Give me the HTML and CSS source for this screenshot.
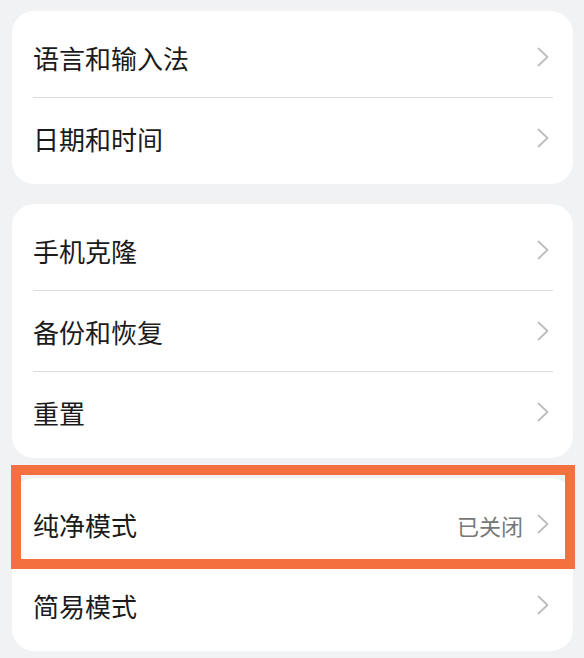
FILE: index.html
```html
<!DOCTYPE html>
<html lang="zh-CN">
<head>
    <meta charset="UTF-8">
    <meta name="viewport" content="width=device-width, initial-scale=1.0">
    <title>系统设置</title>
    <link rel="stylesheet" href="styles.css">
</head>
<body>
    <!-- 语言与时间 -->
    <div class="card">
        <div class="row">
            <span class="label">语言和输入法</span>
            <svg class="chevron" viewBox="0 0 12 20"><path d="M1.5 1.5 L10.5 10 L1.5 18.5"/></svg>
        </div>
        <div class="divider"></div>
        <div class="row">
            <span class="label">日期和时间</span>
            <svg class="chevron" viewBox="0 0 12 20"><path d="M1.5 1.5 L10.5 10 L1.5 18.5"/></svg>
        </div>
    </div>

    <!-- 数据 -->
    <div class="card">
        <div class="row">
            <span class="label">手机克隆</span>
            <svg class="chevron" viewBox="0 0 12 20"><path d="M1.5 1.5 L10.5 10 L1.5 18.5"/></svg>
        </div>
        <div class="divider"></div>
        <div class="row">
            <span class="label">备份和恢复</span>
            <svg class="chevron" viewBox="0 0 12 20"><path d="M1.5 1.5 L10.5 10 L1.5 18.5"/></svg>
        </div>
        <div class="divider"></div>
        <div class="row">
            <span class="label">重置</span>
            <svg class="chevron" viewBox="0 0 12 20"><path d="M1.5 1.5 L10.5 10 L1.5 18.5"/></svg>
        </div>
    </div>

    <!-- 模式 -->
    <div class="card">
        <div class="row highlighted">
            <span class="label">纯净模式</span>
            <span class="value">已关闭</span>
            <svg class="chevron" viewBox="0 0 12 20"><path d="M1.5 1.5 L10.5 10 L1.5 18.5"/></svg>
        </div>
        <div class="divider"></div>
        <div class="row">
            <span class="label">简易模式</span>
            <svg class="chevron" viewBox="0 0 12 20"><path d="M1.5 1.5 L10.5 10 L1.5 18.5"/></svg>
        </div>
    </div>
</body>
</html>
```

FILE: styles.css
```css
body {
    margin: 0;
    padding: 11px 11px 0 12px;
    background-color: #f1f2f4;
    font-family: "Noto Sans CJK SC", "Noto Sans", sans-serif;
    display: flex;
    flex-direction: column;
    gap: 20px;
}
.card {
    position: relative;
    background-color: #ffffff;
    border-radius: 22px;
    padding: 6px 0;
}
.row {
    position: relative;
    height: 80px;
    display: flex;
    align-items: center;
    padding: 0 24px 0 21px;
}
.label {
    flex: 1;
    font-size: 26px;
    color: #1b1b1b;
    line-height: 1;
    padding-top: 2px;
}
.value {
    font-size: 22px;
    color: #777777;
    margin-right: 14px;
    line-height: 1;
    padding-top: 2px;
}
.chevron {
    width: 12px;
    height: 20px;
    fill: none;
    stroke: #bdbdbd;
    stroke-width: 1.8;
    stroke-linecap: round;
    stroke-linejoin: round;
}
.divider {
    height: 1px;
    margin: 0 20px 0 21px;
    background-color: #dcdcdc;
}
.highlighted::after {
    content: "";
    position: absolute;
    top: -19px;
    left: -1px;
    width: 544px;
    height: 84px;
    border: 10px solid #f4703f;
}
```
